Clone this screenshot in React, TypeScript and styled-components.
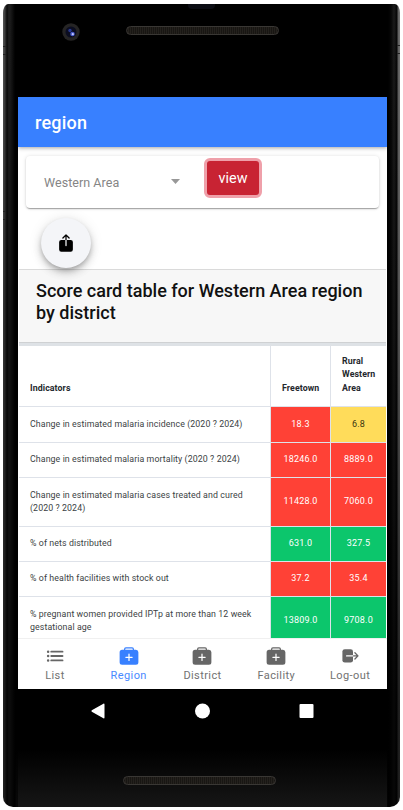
import React from 'react';
import styled, { createGlobalStyle } from 'styled-components';
import { IoShare, IoList, IoMedkit } from 'react-icons/io5';

const Global = createGlobalStyle`
  * { box-sizing: border-box; }
  html, body { margin: 0; padding: 0; background: #fff; }
  body { font-family: Roboto, "Liberation Sans", sans-serif; overflow: hidden; }
`;

const Stage = styled.div`
  width: 403px;
  height: 810px;
  padding: 4px 3px 3px;
  background: #fff;
`;

const Device = styled.div`
  position: relative;
  display: flex;
  flex-direction: column;
  width: 397px;
  height: 803px;
  padding: 0 13px 0 15px;
  background:
    linear-gradient(180deg, transparent 0, rgba(0, 0, 0, 0.35) 300px, rgba(0, 0, 0, 0.6) 700px) left / 15px 100% no-repeat,
    linear-gradient(180deg, transparent 0, rgba(0, 0, 0, 0.2) 300px, rgba(0, 0, 0, 0.7) 700px) right / 13px 100% no-repeat,
    linear-gradient(90deg, #5a5a5a 0, #3a3a3a 2px, #0b0b0b 4px, #202020 6px, #171717 8px, #000 12px, transparent 13px),
    linear-gradient(270deg, #757575 0, #606060 2px, #050505 3px, #1a1a1a 6px, #060606 9px, #000 12px, transparent 13px),
    linear-gradient(180deg, #000 0, #000 745px, #161616 803px);
  border-radius: 5px 5px 10px 10px / 9px 9px 10px 10px;
  overflow: hidden;
`;

const Sensor = styled.div`
  position: absolute;
  top: 0;
  left: 185px;
  width: 27px;
  height: 5px;
  background: #0b0c13;
  border-radius: 0 0 4px 4px;
`;

const SideKey = styled.div<{ $side: 'left' | 'right'; $top: number }>`
  position: absolute;
  ${(p) => p.$side}: 0;
  top: ${(p) => p.$top}px;
  width: 3px;
  height: 9px;
  border: solid #222;
  border-width: 1px 0;
`;

const TopBezel = styled.div`
  display: flex;
  flex: 0 0 93px;
  align-items: flex-start;
  padding: 19px 0 0 44px;
`;

const Lens = styled.svg`
  flex: none;
  width: 18px;
  height: 18px;
`;

const Grille = styled.div`
  width: 153px;
  height: 9px;
  border: 1px solid #393734;
  border-radius: 5px;
  background: repeating-linear-gradient(90deg, #181613 0, #181613 1px, #24211d 1px, #24211d 2px);
`;

const TopGrille = styled(Grille)`
  margin: 3px 0 0 46px;
`;

const Screen = styled.main`
  display: flex;
  flex: 0 0 592px;
  flex-direction: column;
  width: 369px;
  overflow: hidden;
  background: #fff;
`;

const Header = styled.header`
  display: flex;
  flex: 0 0 50px;
  align-items: center;
  padding: 1px 17px 0;
  background: #3880ff;
  color: #fff;
  font-size: 18px;
  font-weight: 500;
  letter-spacing: 0.22px;
  box-shadow: 0 1px 4px rgba(0, 0, 0, 0.35);
  z-index: 1;
`;

const Content = styled.div`
  display: flex;
  flex: 1;
  flex-direction: column;
  min-height: 0;
  overflow: hidden;
`;

const FilterCard = styled.section`
  display: flex;
  flex: 0 0 52px;
  align-items: flex-start;
  margin: 9px 8px 0;
  padding: 2px 0 0 18px;
  border-radius: 4px;
  background: #fff;
  box-shadow: 0 2px 1px -1px rgba(0, 0, 0, 0.24), 0 1px 2px rgba(0, 0, 0, 0.16), 0 0 4px rgba(0, 0, 0, 0.1);
`;

const Select = styled.div`
  display: flex;
  align-items: center;
  justify-content: space-between;
  width: 136px;
  height: 48px;
  color: #858585;
  font-size: 12.5px;
  letter-spacing: 0.05px;
`;

const Caret = styled.svg`
  width: 9px;
  height: 5px;
  margin-top: -2px;
  fill: #989898;
`;

const ViewButton = styled.button`
  width: 58px;
  height: 40px;
  margin-left: 24px;
  padding: 0;
  border: 3px solid #efa0aa;
  border-radius: 6px;
  background: #c82333;
  color: #fff;
  font: 400 14.4px Roboto, sans-serif;
`;

const Fab = styled.button`
  display: flex;
  flex: none;
  align-items: center;
  justify-content: center;
  width: 50px;
  height: 50px;
  margin: 10px 0 1px 23px;
  padding: 0;
  border: 0;
  border-radius: 50%;
  background: #f4f5f8;
  color: #000;
  font-size: 20px;
  box-shadow: 0 3px 5px -1px rgba(0, 0, 0, 0.22), 0 5px 9px rgba(0, 0, 0, 0.16), 0 1px 14px rgba(0, 0, 0, 0.1);
  z-index: 1;
`;

const Title = styled.h1`
  flex: 0 0 74px;
  margin: 0 1px;
  padding: 10px 17px 0;
  border-top: 1px solid #dadada;
  border-bottom: 1px solid #cfd1d3;
  background: #f7f7f7;
  color: #111;
  font-size: 18px;
  font-weight: 500;
  line-height: 21.5px;
  letter-spacing: 0;
  white-space: nowrap;
`;

const Table = styled.div`
  flex: none;
  width: 367px;
  margin-left: 1px;
  border-top: 3px solid #dee2e6;
  color: #3b3f44;
  font-size: 8.8px;
  line-height: 13.3px;
  letter-spacing: 0.09px;
`;

const Row = styled.div<{ $height: number }>`
  display: grid;
  grid-template-columns: 252px 60px 55px;
  height: ${(p) => p.$height}px;
  border-bottom: 1px solid #dee2e9;
`;

const HeadCell = styled.div`
  display: flex;
  align-items: flex-end;
  padding: 0 8px 11px 11px;
  border-right: 1px solid #dee2e9;
  color: #24282d;
  font-weight: 700;
  &:last-child { border-right: 0; }
`;

const LabelCell = styled.div`
  display: flex;
  align-items: center;
  padding-left: 11px;
  border-right: 1px solid #dee2e9;
  white-space: pre;
`;

const tones = {
  red: ['#ff4136', '#fff'],
  yellow: ['#ffdc5a', '#3b3510'],
  green: ['#0cc66c', '#fff'],
};
type Tone = keyof typeof tones;

const ValueCell = styled.div<{ $tone: Tone }>`
  display: flex;
  align-items: center;
  justify-content: center;
  border-right: 1px solid #dee2e9;
  background: ${(p) => tones[p.$tone][0]};
  color: ${(p) => tones[p.$tone][1]};
  font-size: 9px;
  letter-spacing: 0.2px;
  &:last-child { border-right: 0; }
`;

const TabBar = styled.nav`
  display: grid;
  flex: 0 0 51px;
  grid-template-columns: repeat(5, 1fr);
  border-top: 1px solid #f0f0f0;
  background: #fff;
  z-index: 1;
`;

const Tab = styled.div<{ $active?: boolean }>`
  display: flex;
  flex-direction: column;
  align-items: center;
  padding-top: 7px;
  color: ${(p) => (p.$active ? '#3880ff' : '#666')};
  svg { display: block; font-size: 20px; }
`;

const TabLabel = styled.span`
  margin-top: 3px;
  font-size: 11px;
  line-height: 13px;
  letter-spacing: 0.4px;
  opacity: 0.92;
`;

const SystemNav = styled.div`
  display: flex;
  flex: 0 0 43px;
  align-items: center;
  justify-content: space-between;
  padding: 0 73px;
`;

const NavGlyph = styled.svg`
  width: 15px;
  height: 16px;
  fill: #fff;
`;

const BottomBezel = styled.div`
  display: flex;
  flex: 1;
  padding: 44px 0 0 105px;
`;

function LogOutIcon() {
  return (
    <svg width="20" height="20" viewBox="0 0 20 20" fill="none" strokeWidth="1.3" strokeLinecap="round" strokeLinejoin="round">
      <rect x="2.4" y="3.2" width="10.6" height="13.4" rx="2.4" fill="currentColor" />
      <path d="M6.6 9.9H13" stroke="#fff" />
      <path d="M13.6 9.9h4.2M14.9 6.800 18 9.900l-3.100 3.100" stroke="currentColor" />
    </svg>
  );
}

const rows: { label: string; height: number; values: [string, Tone][] }[] = [
  { label: 'Change in estimated malaria incidence (2020 ? 2024)', height: 36, values: [['18.3', 'red'], ['6.8', 'yellow']] },
  { label: 'Change in estimated malaria mortality (2020 ? 2024)', height: 35, values: [['18246.0', 'red'], ['8889.0', 'red']] },
  { label: 'Change in estimated malaria cases treated and cured\n(2020 ? 2024)', height: 49, values: [['11428.0', 'red'], ['7060.0', 'red']] },
  { label: '% of nets distributed', height: 35, values: [['631.0', 'green'], ['327.5', 'green']] },
  { label: '% of health facilities with stock out', height: 35, values: [['37.2', 'red'], ['35.4', 'red']] },
  { label: '% pregnant women provided IPTp at more than 12 week\ngestational age', height: 49, values: [['13809.0', 'green'], ['9708.0', 'green']] },
];

const tabs = [
  { label: 'List', Icon: IoList },
  { label: 'Region', Icon: IoMedkit, active: true },
  { label: 'District', Icon: IoMedkit },
  { label: 'Facility', Icon: IoMedkit },
  { label: 'Log-out', Icon: LogOutIcon },
];

export default function App() {
  return (
    <>
      <Global />
      <Stage>
        <Device>
          <Sensor />
          <SideKey $side="left" $top={42} />
          <SideKey $side="left" $top={207} />
          <SideKey $side="right" $top={41} />
          <TopBezel>
            <Lens viewBox="0 0 18 18">
              <circle cx="9" cy="9" r="8.7" fill="#252424" />
              <circle cx="9" cy="9" r="5.5" fill="#0b0d20" />
              <circle cx="8" cy="7.5" r="1.7" fill="#26368c" />
              <circle cx="10.5" cy="11" r="2.3" fill="#4658c8" />
              <circle cx="10.8" cy="11.2" r="1.1" fill="#c3c8ff" />
            </Lens>
            <TopGrille />
          </TopBezel>
          <Screen>
            <Header>region</Header>
            <Content>
              <FilterCard>
                <Select>
                  Western Area
                  <Caret viewBox="0 0 9 5"><path d="M0 0h9L4.5 5z" /></Caret>
                </Select>
                <ViewButton>view</ViewButton>
              </FilterCard>
              <Fab aria-label="Share"><IoShare /></Fab>
              <Title>Score card table for Western Area region<br />by district</Title>
              <Table>
                <Row $height={61}>
                  <HeadCell>Indicators</HeadCell>
                  <HeadCell>Freetown</HeadCell>
                  <HeadCell>Rural<br />Western<br />Area</HeadCell>
                </Row>
                {rows.map((row) => (
                  <Row key={row.label} $height={row.height}>
                    <LabelCell>{row.label}</LabelCell>
                    {row.values.map(([value, tone]) => (
                      <ValueCell key={value} $tone={tone}>{value}</ValueCell>
                    ))}
                  </Row>
                ))}
              </Table>
            </Content>
            <TabBar>
              {tabs.map(({ label, Icon, active }) => (
                <Tab key={label} $active={active}>
                  <Icon />
                  <TabLabel>{label}</TabLabel>
                </Tab>
              ))}
            </TabBar>
          </Screen>
          <SystemNav>
            <NavGlyph viewBox="0 0 15 16"><path d="M.8 7.3 12.4.7q1.100-.4 1.100.8v13q0 1.200-1.100.8L.8 8.700q-.8-.7 0-1.400z" /></NavGlyph>
            <NavGlyph viewBox="0 0 15 16"><circle cx="7.5" cy="8" r="7.5" /></NavGlyph>
            <NavGlyph viewBox="0 0 15 16"><rect x=".5" y="1" width="14" height="14" rx="1" /></NavGlyph>
          </SystemNav>
          <BottomBezel><Grille /></BottomBezel>
        </Device>
      </Stage>
    </>
  );
}
